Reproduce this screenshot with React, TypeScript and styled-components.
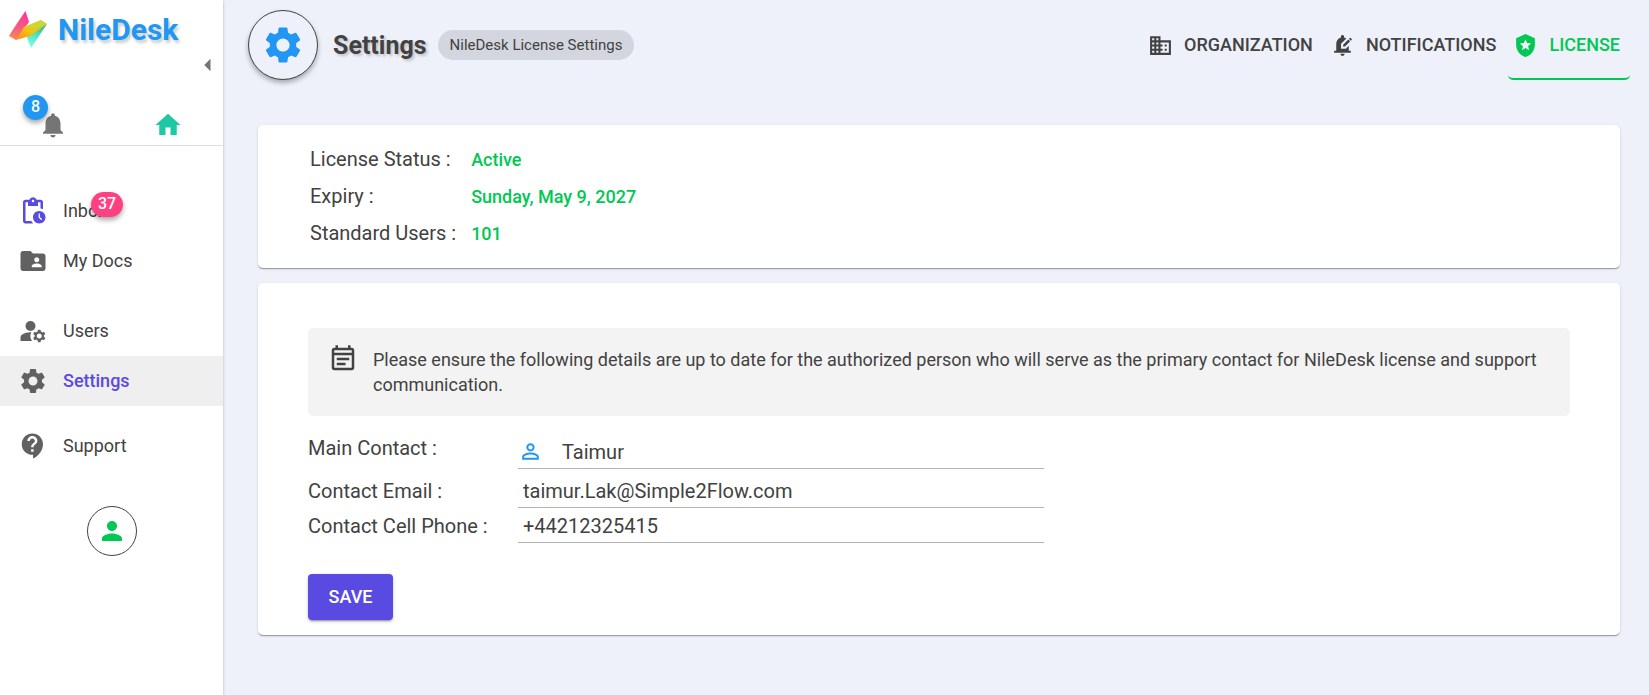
import React, { useState } from "react";
import styled, { createGlobalStyle, css } from "styled-components";
import {
  MdArrowLeft,
  MdBusiness,
  MdContactSupport,
  MdEditNotifications,
  MdFolderShared,
  MdHome,
  MdLocalPolice,
  MdManageAccounts,
  MdNotifications,
  MdOutlineEventNote,
  MdPendingActions,
  MdPerson,
  MdPersonOutline,
  MdSettings,
} from "react-icons/md";

const color = {
  text: "#424242",
  icon: "#616161",
  blue: "#2196f3",
  green: "#00c853",
  teal: "#1ec8a5",
  purple: "#594ae2",
  pink: "#ff4081",
  page: "#eef1f9",
};

const GlobalStyle = createGlobalStyle`
  *, *::before, *::after { box-sizing: border-box; }
  body {
    margin: 0;
    background: ${color.page};
    color: ${color.text};
    font-family: Roboto, "Liberation Sans", sans-serif;
    font-size: 18px;
    line-height: 24px;
  }
  button, input { font: inherit; color: inherit; }
  svg { display: block; flex: none; }
`;

const Shell = styled.div`
  display: flex;
  min-height: 100vh;
`;

const Sidebar = styled.aside`
  flex: none;
  width: 223px;
  background: #fff;
  box-shadow: 0 1px 3px rgba(0, 0, 0, 0.24);
`;

const SidebarHead = styled.div`
  display: flex;
  flex-direction: column;
  height: 146px;
  border-bottom: 1px solid #e0e0e0;
`;

const Brand = styled.a`
  display: flex;
  align-items: center;
  gap: 10px;
  height: 50px;
  padding: 10px 0 0 8px;
  color: ${color.blue};
  font-size: 30px;
  font-weight: 700;
  text-decoration: none;
  text-shadow: 2px 3px 3px rgba(0, 0, 0, 0.2);
`;

const PlainButton = styled.button`
  display: flex;
  padding: 0;
  border: 0;
  background: none;
  cursor: pointer;
`;

const CollapseButton = styled(PlainButton)`
  align-self: flex-end;
  color: #757575;
`;

const QuickActions = styled.div`
  display: flex;
  justify-content: space-between;
  margin-top: auto;
  padding: 0 40px 5px 38px;
`;

const QuickButton = styled(PlainButton)<{ $tone: string }>`
  position: relative;
  color: ${(p) => p.$tone};
`;

const Badge = styled.span<{ $tone: string }>`
  position: absolute;
  min-width: 25px;
  height: 25px;
  padding: 0 7px;
  border-radius: 13px;
  background: ${(p) => p.$tone};
  color: #fff;
  font-size: 16px;
  line-height: 24px;
  font-weight: 500;
  text-align: center;
  box-shadow: 0 3px 5px rgba(0, 0, 0, 0.35);
`;

const BellBadge = styled(Badge)`
  right: 20px;
  bottom: 20px;
`;

const InboxBadge = styled(Badge)`
  left: 28px;
  top: -7px;
`;

const Nav = styled.nav`
  display: flex;
  flex-direction: column;
  gap: 15px;
  padding-top: 40px;
`;

const NavGroup = styled.div<{ $spaced?: boolean }>`
  padding-top: ${(p) => (p.$spaced ? 5 : 0)}px;
`;

const NavLink = styled.a<{ $active?: boolean }>`
  display: flex;
  align-items: center;
  gap: 15px;
  height: 50px;
  padding-left: 18px;
  color: ${color.text};
  text-decoration: none;
  svg {
    color: ${color.icon};
  }
  ${(p) =>
    p.$active &&
    css`
      background: #efefef;
      color: ${color.purple};
      font-weight: 500;
    `}
`;

const PurpleIcon = styled.span`
  svg {
    color: ${color.purple};
  }
`;

const NavText = styled.span`
  position: relative;
`;

const RoundButton = styled(PlainButton)`
  align-items: center;
  justify-content: center;
  width: 50px;
  height: 50px;
  margin: 35px auto 0;
  border: 1px solid ${color.text};
  border-radius: 50%;
  color: ${color.green};
`;

const Main = styled.main`
  flex: 1;
  min-width: 0;
  padding: 10px 19px 40px 25px;
`;

const Header = styled.header`
  display: flex;
  align-items: flex-start;
  justify-content: space-between;
  flex-wrap: wrap;
`;

const TitleGroup = styled.div`
  display: flex;
  align-items: center;
`;

const TitleIcon = styled.span`
  display: flex;
  align-items: center;
  justify-content: center;
  width: 70px;
  height: 70px;
  border: 1px solid ${color.text};
  border-radius: 50%;
  background: ${color.page};
  color: ${color.blue};
  box-shadow: 0 3px 5px rgba(0, 0, 0, 0.3);
`;

const Title = styled.h1`
  margin: 0 11px 0 15px;
  padding-top: 2px;
  font-size: 25px;
  line-height: 32px;
  font-weight: 700;
  text-shadow: 2px 2px 3px rgba(0, 0, 0, 0.2);
`;

const Chip = styled.span`
  padding: 0 12px;
  border-radius: 15px;
  background: #d3d6de;
  font-size: 15px;
  line-height: 30px;
`;

const Tabs = styled.nav`
  display: flex;
  gap: 2px;
`;

const Tab = styled.a<{ $active?: boolean }>`
  display: flex;
  align-items: center;
  gap: 11px;
  height: 70px;
  padding: 2px 10px 0 5px;
  border-bottom: 2px solid transparent;
  border-radius: 5px;
  color: ${color.text};
  font-weight: 500;
  text-decoration: none;
  ${(p) =>
    p.$active &&
    css`
      border-color: ${color.green};
      color: ${color.green};
    `}
`;

const Cards = styled.div`
  display: flex;
  flex-direction: column;
  gap: 15px;
  padding: 45px 10px 0 10px;
`;

const Card = styled.section`
  padding: 16px 50px 15px;
  border-radius: 5px;
  background: #fff;
  box-shadow:
    0 2px 1px -1px rgba(0, 0, 0, 0.2),
    0 1px 1px rgba(0, 0, 0, 0.14),
    0 1px 3px rgba(0, 0, 0, 0.12);
`;

const Facts = styled.dl`
  display: grid;
  grid-template-columns: max-content 1fr;
  column-gap: 15px;
  margin: 0 2px 1px;
  line-height: 37px;
`;

const FactName = styled.dt`
  font-size: 20px;
`;

const FactValue = styled.dd`
  margin: 0;
  color: ${color.green};
  font-weight: 500;
`;

const Notice = styled.div`
  display: flex;
  gap: 15px;
  margin-top: 29px;
  padding: 16px 20px 19px;
  border-radius: 5px;
  background: #f3f3f3;
`;

const NoticeText = styled.p`
  margin: 0;
  padding-top: 3px;
  line-height: 25px;
`;

const Form = styled.form`
  padding-top: 15px;
`;

const FieldRow = styled.div<{ $space?: number }>`
  display: grid;
  grid-template-columns: 210px minmax(0, 526px);
  align-items: start;
  padding-top: ${(p) => p.$space ?? 0}px;
`;

const Label = styled.label`
  font-size: 20px;
  line-height: 34px;
`;

const Field = styled.div<{ $drop?: number }>`
  display: flex;
  align-items: center;
  height: 34px;
  margin-top: ${(p) => p.$drop ?? 0}px;
  border-bottom: 1px solid #b3b3b3;
  color: ${color.blue};
`;

const Input = styled.input<{ $indent?: boolean }>`
  flex: 1;
  min-width: 0;
  height: 33px;
  padding: 0 0 0 ${(p) => (p.$indent ? 19 : 5)}px;
  border: 0;
  outline: 0;
  background: none;
  color: ${color.text};
  font-size: 20px;
`;

const SaveButton = styled.button`
  min-width: 85px;
  height: 46px;
  margin-top: 31px;
  padding: 0 20px;
  border: 0;
  border-radius: 4px;
  background: ${color.purple};
  color: #fff;
  font-weight: 500;
  cursor: pointer;
  box-shadow:
    0 3px 1px -2px rgba(0, 0, 0, 0.2),
    0 2px 2px rgba(0, 0, 0, 0.14),
    0 1px 5px rgba(0, 0, 0, 0.12);
`;

function Logo() {
  return (
    <svg width="40" height="40" viewBox="0 0 40 40" aria-hidden="true">
      <defs>
        <linearGradient id="rose" x1="0.8" y1="0" x2="0.2" y2="1">
          <stop offset="0" stopColor="#ff2f9c" />
          <stop offset="0.55" stopColor="#fb5f7c" />
          <stop offset="1" stopColor="#fb8a4e" />
        </linearGradient>
        <linearGradient id="gold" x1="0" y1="1" x2="1" y2="0">
          <stop offset="0" stopColor="#f58a1c" />
          <stop offset="0.45" stopColor="#f2c50f" />
          <stop offset="1" stopColor="#a9d84c" />
        </linearGradient>
        <linearGradient id="aqua" x1="0.8" y1="0" x2="0.3" y2="1">
          <stop offset="0" stopColor="#3fae74" />
          <stop offset="0.45" stopColor="#4fdcbc" />
          <stop offset="1" stopColor="#7cffe9" />
        </linearGradient>
      </defs>
      <path d="M17.5 1 L21 12 L8 30 L1 26 Z" fill="url(#rose)" />
      <path d="M17.5 1 L8 14 L1 26 L12 17 Z" fill="#e8508c" opacity="0.4" />
      <path d="M39 14 L20 25 L19 28 L23 38 L29 29 Z" fill="url(#aqua)" />
      <path d="M8 30 L16 17 L33 10 L39 14 L22 26 Z" fill="url(#gold)" />
      <path d="M16 17 L33 10 L39 14 L26 18 Z" fill="#cdd936" opacity="0.7" />
    </svg>
  );
}

export default function App() {
  const [contact, setContact] = useState("Taimur");
  const [email, setEmail] = useState("taimur.Lak@Simple2Flow.com");
  const [phone, setPhone] = useState("+44212325415");

  return (
    <>
      <GlobalStyle />
      <Shell>
        <Sidebar>
          <SidebarHead>
            <Brand href="#">
              <Logo />
              NileDesk
            </Brand>
            <CollapseButton type="button" aria-label="Collapse menu">
              <MdArrowLeft size={30} />
            </CollapseButton>
            <QuickActions>
              <QuickButton type="button" aria-label="Notifications" $tone="#757575">
                <MdNotifications size={30} />
                <BellBadge $tone={color.blue}>8</BellBadge>
              </QuickButton>
              <QuickButton type="button" aria-label="Home" $tone={color.teal}>
                <MdHome size={30} />
              </QuickButton>
            </QuickActions>
          </SidebarHead>
          <Nav>
            <NavGroup>
              <NavLink href="#inbox">
                <PurpleIcon>
                  <MdPendingActions size={30} />
                </PurpleIcon>
                <NavText>
                  Inbox
                  <InboxBadge $tone={color.pink}>37</InboxBadge>
                </NavText>
              </NavLink>
              <NavLink href="#docs">
                <MdFolderShared size={30} />
                My Docs
              </NavLink>
            </NavGroup>
            <NavGroup $spaced>
              <NavLink href="#users">
                <MdManageAccounts size={30} />
                Users
              </NavLink>
              <NavLink href="#settings" $active>
                <MdSettings size={30} />
                Settings
              </NavLink>
            </NavGroup>
            <NavGroup>
              <NavLink href="#support">
                <MdContactSupport size={30} />
                Support
              </NavLink>
            </NavGroup>
          </Nav>
          <RoundButton type="button" aria-label="Profile">
            <MdPerson size={30} />
          </RoundButton>
        </Sidebar>

        <Main>
          <Header>
            <TitleGroup>
              <TitleIcon>
                <MdSettings size={44} />
              </TitleIcon>
              <Title>Settings</Title>
              <Chip>NileDesk License Settings</Chip>
            </TitleGroup>
            <Tabs>
              <Tab href="#organization">
                <MdBusiness size={25} />
                ORGANIZATION
              </Tab>
              <Tab href="#notifications">
                <MdEditNotifications size={25} />
                NOTIFICATIONS
              </Tab>
              <Tab href="#license" $active>
                <MdLocalPolice size={25} />
                LICENSE
              </Tab>
            </Tabs>
          </Header>

          <Cards>
            <Card>
              <Facts>
                <FactName>License Status :</FactName>
                <FactValue>Active</FactValue>
                <FactName>Expiry :</FactName>
                <FactValue>Sunday, May 9, 2027</FactValue>
                <FactName>Standard Users :</FactName>
                <FactValue>101</FactValue>
              </Facts>
            </Card>
            <Card>
              <Notice>
                <MdOutlineEventNote size={30} />
                <NoticeText>
                  Please ensure the following details are up to date for the authorized person who
                  will serve as the primary contact for NileDesk license and support communication.
                </NoticeText>
              </Notice>
              <Form onSubmit={(e) => e.preventDefault()}>
                <FieldRow>
                  <Label htmlFor="contact">Main Contact :</Label>
                  <Field $drop={4}>
                    <MdPersonOutline size={25} />
                    <Input
                      id="contact"
                      $indent
                      value={contact}
                      onChange={(e) => setContact(e.target.value)}
                    />
                  </Field>
                </FieldRow>
                <FieldRow $space={5}>
                  <Label htmlFor="email">Contact Email :</Label>
                  <Field>
                    <Input
                      id="email"
                      type="email"
                      value={email}
                      onChange={(e) => setEmail(e.target.value)}
                    />
                  </Field>
                </FieldRow>
                <FieldRow $space={1}>
                  <Label htmlFor="phone">Contact Cell Phone :</Label>
                  <Field>
                    <Input
                      id="phone"
                      type="tel"
                      value={phone}
                      onChange={(e) => setPhone(e.target.value)}
                    />
                  </Field>
                </FieldRow>
                <SaveButton type="submit">SAVE</SaveButton>
              </Form>
            </Card>
          </Cards>
        </Main>
      </Shell>
    </>
  );
}
